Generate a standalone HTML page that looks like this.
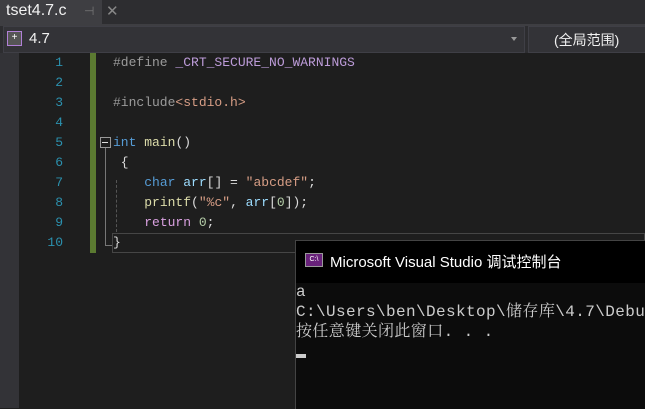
<!DOCTYPE html>
<html><head><meta charset="utf-8"><style>
body{margin:0;width:645px;height:408px;background:#1e1e1e;position:relative;overflow:hidden;font-family:"Liberation Sans","Noto Sans CJK SC",sans-serif}
.a{position:absolute}
.code{font-family:"Liberation Mono","Noto Sans CJK SC",monospace;font-size:13px;white-space:pre;line-height:20px}
.ln{width:63px;text-align:right;color:#2b91af}
</style></head><body>
<div class="a" style="left:0;top:0;width:645px;height:26px;background:#2d2d30"></div>
<div class="a" style="left:0;top:0;width:102px;height:24px;background:#3e3e42"></div>
<div class="a" style="left:6px;top:2px;color:#f1f1f1;font-size:16px">tset4.7.c</div>
<div class="a" style="left:84px;top:4px;color:#777;font-size:12px">⊣</div>
<div class="a" style="left:106px;top:2px;color:#888;font-size:15px">✕</div>
<div class="a" style="left:0;top:24px;width:645px;height:2px;background:#3e3e42"></div>
<div class="a" style="left:0;top:26px;width:645px;height:27px;background:#2d2d30"></div>
<div class="a" style="left:3px;top:26px;width:520px;height:25px;border:1px solid #3f3f46;background:#333337"></div>
<div class="a" style="left:7px;top:31px;width:13px;height:13px;border:1px solid #b180d7;background:#555;color:#fff;font-size:10px;line-height:12px;text-align:center">+</div>
<div class="a" style="left:29px;top:30px;color:#f1f1f1;font-size:15px">4.7</div>
<div class="a" style="left:511px;top:37px;border:3px solid transparent;border-top:4px solid #999"></div>
<div class="a" style="left:528px;top:26px;width:117px;height:25px;border:1px solid #3f3f46;background:#333337"></div>
<div class="a" style="left:554px;top:30px;color:#f1f1f1;font-size:14px">(全局范围)</div>
<div class="a" style="left:0;top:53px;width:19px;height:355px;background:#333337"></div>
<div class="a" style="left:90px;top:53px;width:6px;height:200px;background:#5b7a31"></div>
<div class="a code ln" style="left:0;top:53px">1
2
3
4
5
6
7
8
9
10</div>
<div class="a code" style="left:113px;top:53px;color:#dcdcdc"><span style="color:#9b9b9b">#define</span> <span style="color:#bd9cd9">_CRT_SECURE_NO_WARNINGS</span>

<span style="color:#9b9b9b">#include</span><span style="color:#d69d85">&lt;stdio.h&gt;</span>

<span style="color:#569cd6">int</span> <span style="color:#dcdcaa">main</span>()
 {
    <span style="color:#569cd6">char</span> <span style="color:#9cdcfe">arr</span>[] = <span style="color:#d69d85">"abcdef"</span>;
    <span style="color:#dcdcaa">printf</span>(<span style="color:#d69d85">"%c"</span>, <span style="color:#9cdcfe">arr</span>[<span style="color:#b5cea8">0</span>]);
    <span style="color:#d8a0df">return</span> <span style="color:#b5cea8">0</span>;
}</div>
<div class="a" style="left:100px;top:137px;width:9px;height:9px;border:1px solid #999"></div>
<div class="a" style="left:102px;top:142px;width:6px;height:1px;background:#ddd"></div>
<div class="a" style="left:105px;top:148px;width:1px;height:97px;background:#777"></div>
<div class="a" style="left:105px;top:245px;width:8px;height:1px;background:#777"></div>
<div class="a" style="left:112px;top:233px;width:533px;height:20px;border:1px solid #464646;box-sizing:border-box"></div>
<div class="a" style="left:116px;top:180px;width:0;height:52px;border-left:1px dashed #555"></div>
<div class="a" style="left:295px;top:240px;width:350px;height:168px;background:#0c0c0c;border-left:1px solid #444;border-top:1px solid #444"></div>
<div class="a" style="left:296px;top:241px;width:349px;height:42px;background:#000"></div>
<div class="a" style="left:305px;top:253px;width:16px;height:12px;background:#68217a;border:1px solid #999;color:#fff;font-size:7px;line-height:12px;text-align:center">C:\</div>
<div class="a" style="left:330px;top:251px;color:#fff;font-size:15px">Microsoft Visual Studio 调试控制台</div>
<div class="a" style="left:296px;top:282px;color:#cccccc;font-family:'Liberation Mono','Noto Serif CJK SC',monospace;font-size:16px;letter-spacing:0.4px;line-height:20px;white-space:pre">a
C:\Users\ben\Desktop\储存库\4.7\Debug
按任意键关闭此窗口. . .</div>
<div class="a" style="left:296px;top:354px;width:10px;height:4px;background:#ccc"></div>
</body></html>
